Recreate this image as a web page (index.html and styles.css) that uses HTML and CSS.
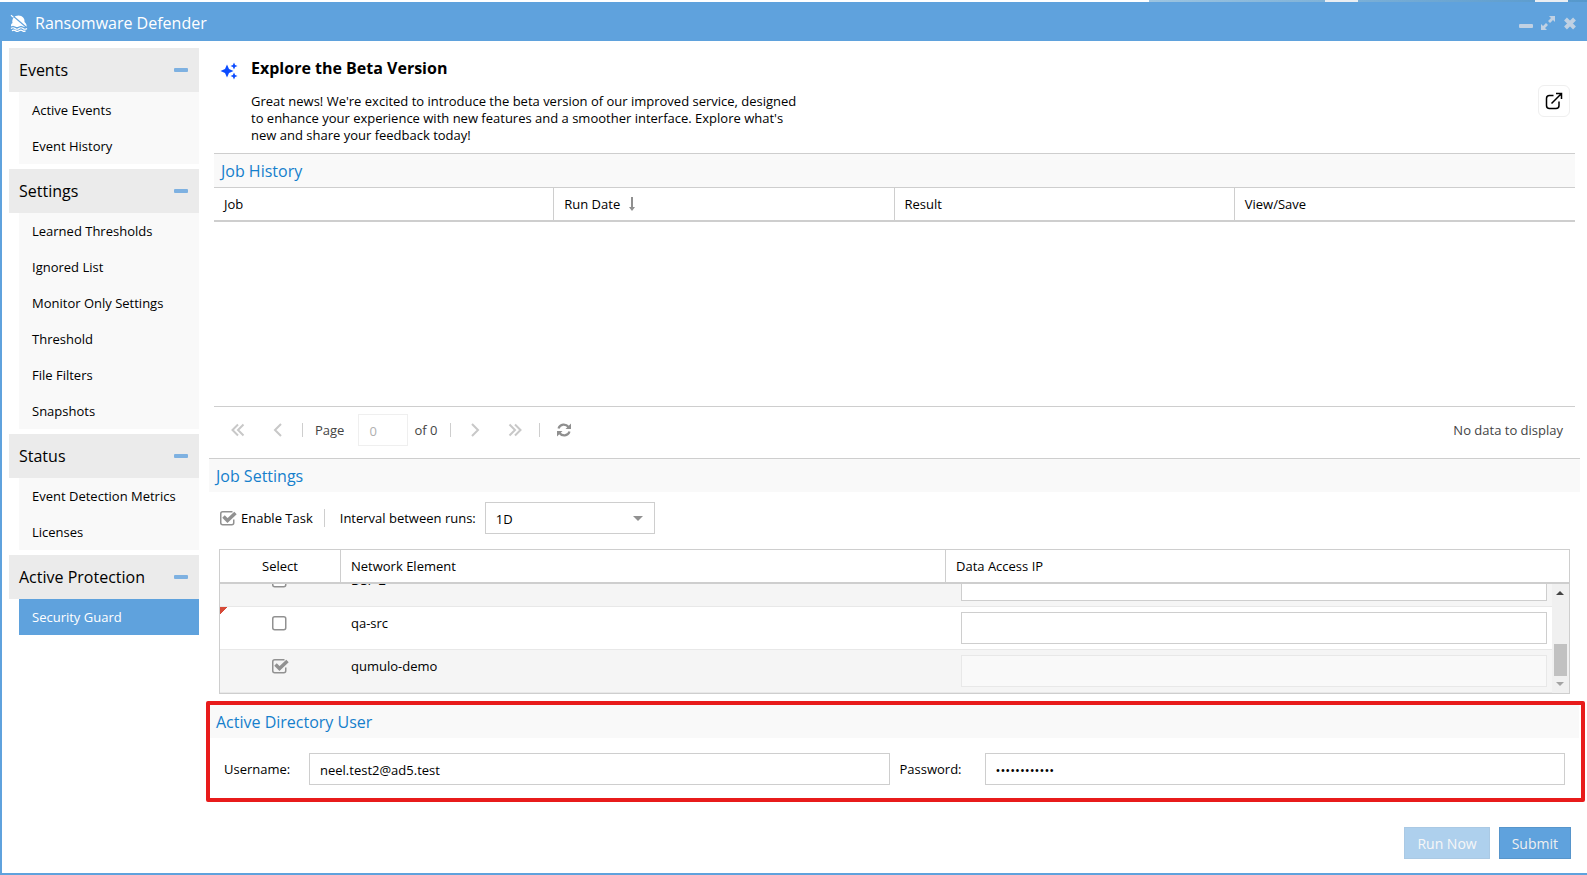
FILE: index.html
```html
<!DOCTYPE html>
<html lang="en">
<head>
<meta charset="utf-8">
<title>Ransomware Defender</title>
<link rel="stylesheet" href="styles.css">
</head>
<body>
<svg class="defs" width="0" height="0" aria-hidden="true">
  <symbol id="dbl-left" viewBox="0 0 14 14"><path d="M7 1.500 1.500 7 7 12.500M12.500 1.500 7 7l5.500 5.500" fill="none" stroke="currentColor" stroke-width="2"/></symbol>
  <symbol id="left" viewBox="0 0 14 14"><path d="M10 1 4 7l6 6" fill="none" stroke="currentColor" stroke-width="2"/></symbol>
</svg>
<div class="backdrop"></div>
<div class="window">
  <header class="titlebar">
    <svg class="logo" width="18" height="18" viewBox="0 0 18 18" aria-hidden="true">
      <path d="M2.500 9C1.500 5 4.500 1.500 8.500 1.500c4 0 6.500 3 6 6.500 1.500 1 2.500 3 2 5H1.500C.5 11.500 1 10 2.500 9z" fill="#fff"/>
      <path d="M1 13q2-1.500 4 0t4 0 4 0 4 0" fill="none" stroke="#5fa2dd" stroke-width="1"/>
      <path d="M1 14.500q2-1.500 4 0t4 0 4 0 4 0M2 16.800q2-1.300 3.500 0t3.500 0 3.500 0 3 0" fill="none" stroke="#fff" stroke-width="1.200"/>
      <path d="M2.500 1.500 16 13" stroke="#5fa2dd" stroke-width="1.100"/>
      <path d="M1 1.200l2.500 2.200" stroke="#fff" stroke-width="1.200"/>
    </svg>
    <h1>Ransomware Defender</h1>
    <div class="tools">
      <button type="button" aria-label="Minimize"><svg width="14" height="16" viewBox="0 0 14 16"><rect y="9" width="14" height="4" rx="1" fill="currentColor"/></svg></button>
      <button type="button" aria-label="Maximize"><svg width="16" height="16" viewBox="0 0 16 16"><path d="M9 1h6v6l-2-2-3 3-2-2 3-3zM7 15H1V9l2 2 3-3 2 2-3 3z" fill="currentColor"/></svg></button>
      <button type="button" aria-label="Close"><svg width="14" height="16" viewBox="0 0 14 16"><path d="M2.500 4l9 9M11.500 4l-9 9" stroke="currentColor" stroke-width="4"/></svg></button>
    </div>
  </header>

  <div class="body">
    <nav class="sidebar">
      <section>
        <h2>Events<span class="minus"></span></h2>
        <ul><li><a href="#">Active Events</a></li><li><a href="#">Event History</a></li></ul>
      </section>
      <section>
        <h2>Settings<span class="minus"></span></h2>
        <ul><li><a href="#">Learned Thresholds</a></li><li><a href="#">Ignored List</a></li><li><a href="#">Monitor Only Settings</a></li><li><a href="#">Threshold</a></li><li><a href="#">File Filters</a></li><li><a href="#">Snapshots</a></li></ul>
      </section>
      <section>
        <h2>Status<span class="minus"></span></h2>
        <ul><li><a href="#">Event Detection Metrics</a></li><li><a href="#">Licenses</a></li></ul>
      </section>
      <section>
        <h2>Active Protection<span class="minus"></span></h2>
        <ul><li><a href="#" class="current">Security Guard</a></li></ul>
      </section>
    </nav>

    <main class="main">
      <section class="banner">
        <svg class="spark" width="18" height="18" viewBox="0 0 18 18" aria-hidden="true"><path d="M7 2.500l2 4.500 4.500 2-4.500 2-2 4.500L5 11 .5 9 5 7zM14 .5l1.100 2.400L17.500 4l-2.400 1.100L14 7.500l-1.100-2.400L10.500 4l2.400-1.100zM14 10.500l1.100 2.400 2.400 1.100-2.400 1.100L14 17.500l-1.100-2.400-2.400-1.100 2.400-1.100z" fill="#0b4bff"/></svg>
        <div class="pitch">
          <h2>Explore the Beta Version</h2>
          <p>Great news! We're excited to introduce the beta version of our improved service, designed to enhance your experience with new features and a smoother interface. Explore what's new and share your feedback today!</p>
        </div>
        <button type="button" class="open" aria-label="Open beta version"><svg width="18" height="18" viewBox="0 0 18 18"><path d="M8.500 3.500H4.500Q1.500 3.500 1.500 6.500v7q0 3 3 3h6.500q3 0 3-3V9.500M6.500 11.500 16 2M11 1.500h5.500V7" fill="none" stroke="#000" stroke-width="1.500"/></svg></button>
      </section>

      <section class="history">
        <h2 class="panel-title">Job History</h2>
        <table class="jobs">
          <thead><tr><th>Job</th><th>Run Date<svg class="sort" width="8" height="14" viewBox="0 0 8 14" aria-hidden="true"><path d="M3 0h2v10h2l-3 4-3-4h2z" fill="#8f8f8f"/></svg></th><th>Result</th><th>View/Save</th></tr></thead>
        </table>
        <div class="pager">
          <button type="button" aria-label="First page"><svg width="14" height="14"><use href="#dbl-left"/></svg></button>
          <button type="button" aria-label="Previous page"><svg width="14" height="14"><use href="#left"/></svg></button>
          <span class="bar"></span>
          <label for="page">Page</label>
          <input id="page" value="0" disabled>
          <span>of 0</span>
          <span class="bar"></span>
          <button type="button" aria-label="Next page"><svg class="flip" width="14" height="14"><use href="#left"/></svg></button>
          <button type="button" aria-label="Last page"><svg class="flip" width="14" height="14"><use href="#dbl-left"/></svg></button>
          <span class="bar"></span>
          <button type="button" class="refresh" aria-label="Refresh"><svg width="14" height="14" viewBox="0 0 14 14"><path d="M1.500 5.500C3 .5 9 .5 11.500 4M12.500 8.500C11 13.500 5 13.500 2.500 10" fill="none" stroke="currentColor" stroke-width="2.200"/><path d="M14 .5V6H8.500zM0 13.500V8h5.500z" fill="currentColor"/></svg></button>
          <span class="status">No data to display</span>
        </div>
      </section>

      <section class="settings">
        <h2 class="panel-title">Job Settings</h2>
        <div class="options">
          <input type="checkbox" id="enable" checked><label for="enable">Enable Task</label>
          <span class="bar"></span>
          <label for="interval">Interval between runs:</label>
          <select id="interval"><option>1D</option></select>
        </div>
        <div class="grid">
          <table class="elements head">
            <colgroup><col class="c1"><col class="c2"><col></colgroup>
            <thead><tr><th>Select</th><th>Network Element</th><th>Data Access IP</th></tr></thead>
          </table>
          <div class="viewport">
            <div class="rows">
              <table class="elements">
                <colgroup><col class="c1"><col class="c2"><col></colgroup>
                <tbody>
                  <tr class="alt"><td><input type="checkbox" aria-label="Select DSF-2"></td><td>DSF-2</td><td><input type="text" aria-label="IP for DSF-2"></td></tr>
                  <tr><td class="dirty"><input type="checkbox" aria-label="Select qa-src"></td><td>qa-src</td><td><input type="text" aria-label="IP for qa-src"></td></tr>
                  <tr class="alt"><td><input type="checkbox" checked aria-label="Select qumulo-demo"></td><td>qumulo-demo</td><td><input type="text" disabled aria-label="IP for qumulo-demo"></td></tr>
                </tbody>
              </table>
            </div>
            <div class="scrollbar">
              <svg width="8" height="4" viewBox="0 0 8 4"><path d="M0 4 4 0l4 4z" fill="#444"/></svg>
              <span class="thumb"></span>
              <svg width="8" height="4" viewBox="0 0 8 4"><path d="M0 0h8L4 4z" fill="#a3a3a3"/></svg>
            </div>
          </div>
        </div>
      </section>

      <section class="directory">
        <h2 class="panel-title">Active Directory User</h2>
        <form class="login">
          <label for="user">Username:</label><input type="text" id="user" value="neel.test2@ad5.test">
          <label for="pass">Password:</label><input type="password" id="pass" value="abcdefghijkl">
        </form>
      </section>

      <footer class="actions">
        <button type="button" class="btn" disabled>Run Now</button>
        <button type="button" class="btn">Submit</button>
      </footer>
    </main>
  </div>
</div>
</body>
</html>
```
FILE: styles.css
```css
* { box-sizing: border-box; }
html, body { height: 100%; }
body { margin: 0; display: flex; flex-direction: column; background: #fff; color: #000; font: 13px/17px "Open Sans", "Noto Sans", sans-serif; }
h1, h2, p, ul { margin: 0; padding: 0; font-weight: 400; }
button { padding: 0; border: 0; background: none; font: inherit; color: inherit; display: inline-flex; align-items: center; justify-content: center; }
input, select { margin: 0; font: inherit; color: #000; }
.defs { position: absolute; }

.backdrop { height: 2px; flex: none; margin-left: 1149px; background: linear-gradient(90deg, transparent 176px, #eaeef2 176px 209px, transparent 209px 386px, #eaeef2 386px 419px, transparent 419px), linear-gradient(90deg, #9cc4e0, #5598cc); }
.window { flex: 1; display: flex; flex-direction: column; border-left: 2px solid #5fa2dd; border-bottom: 2px solid #5fa2dd; }
.titlebar { height: 39px; flex: none; display: flex; align-items: center; padding: 2px 10px 0 8px; background: #5fa2dd; color: #fff; }
.titlebar h1 { flex: 1; margin-left: 7px; font-size: 16px; line-height: 24px; }
.tools { display: flex; gap: 7px; color: #c0d1e3; }

.body { flex: 1; display: flex; padding: 7px 0 14px 7px; }
.sidebar { width: 190px; flex: none; display: flex; flex-direction: column; gap: 5px; }
.sidebar h2 { height: 44px; padding: 0 11px 0 10px; display: flex; align-items: center; justify-content: space-between; background: #ebebeb; font-size: 16px; }
.minus { width: 14px; height: 4px; border-radius: 1px; background: #7eb1e1; }
.sidebar ul { margin-left: 10px; list-style: none; background: #f9f9f9; }
.sidebar a { height: 36px; display: flex; align-items: center; padding-left: 13px; color: #000; text-decoration: none; }
.sidebar a.current { background: #5fa2dd; color: #fff; }

.main { flex: 1; min-width: 0; display: flex; flex-direction: column; padding-left: 7px; }
.banner { display: flex; margin: 0 12px 0 8px; padding-bottom: 9px; }
.spark { margin: 14px 0 0 6px; }
.pitch { flex: 1; margin-left: 13px; }
.pitch h2 { font-size: 16px; font-weight: 700; line-height: 24px; margin: 8px 0 13px; }
.pitch p { max-width: 560px; }
.open { width: 32px; height: 32px; margin: 37px 5px 0 0; border: 1px solid #efefef; border-radius: 6px; }

.panel-title { height: 33px; padding: 1px 7px 0; background: #f9f9f9; color: #157fcc; font-size: 16px; line-height: 32px; }
.history { flex: 1; display: flex; flex-direction: column; margin: 0 12px 0 8px; border-top: 1px solid #cecece; }
table { width: 100%; border-collapse: separate; border-spacing: 0; table-layout: fixed; }
th { padding: 0 10px; text-align: left; font-weight: 400; border-right: 1px solid #cecece; border-bottom: 2px solid #cecece; }
th:last-child { border-right: 0; }
.jobs th { height: 35px; border-top: 1px solid #cecece; }
.sort { margin-left: 8px; vertical-align: -2px; }
.pager { margin-top: auto; height: 52px; display: flex; align-items: center; padding: 0 12px 5px; border-top: 1px solid #cecece; color: #444; }
.pager button { width: 24px; height: 24px; margin-right: 16px; color: #c8c8c8; }
.bar { width: 1px; height: 14px; background: #cecece; }
.pager label { margin: 0 14px 0 12px; }
.pager input { width: 50px; height: 32px; margin-right: 6px; padding: 2px 10px 0; border: 1px solid #efefef; background: #fff; color: #b0b0b0; }
.pager input ~ .bar { margin: 0 12px 0 13px; }
.pager button + .bar, .pager button ~ button + .bar { margin-left: -4px; }
.pager .refresh { color: #8f8f8f; }
.flip { transform: scaleX(-1); }
.status { margin-left: auto; }

.settings { margin: 0 7px 0 3px; border-top: 1px solid #cecece; }
.options { display: flex; align-items: center; padding: 10px 10px 15px 11px; }
.options label { margin-left: 4px; }
.options .bar { height: 18px; margin: 0 11px; }
.options select { width: 170px; height: 32px; margin-left: 9px; padding: 2px 10px 0; border: 1px solid #cecece; border-radius: 0; appearance: none; background: #fff url("data:image/svg+xml,%3Csvg xmlns='http://www.w3.org/2000/svg' viewBox='0 0 10 5'%3E%3Cpath d='M0 0h10L5 5z' fill='%23919191'/%3E%3C/svg%3E") no-repeat right 11px center / 10px 5px; }
input[type=checkbox] { appearance: none; width: 17px; height: 15px; flex: none; display: block; background: url("data:image/svg+xml,%3Csvg xmlns='http://www.w3.org/2000/svg' viewBox='0 0 17 15'%3E%3Crect x='.75' y='.75' width='13' height='13' rx='2' fill='white' stroke='%23919191' stroke-width='1.5'/%3E%3C/svg%3E"); }
input[type=checkbox]:checked { background-image: url("data:image/svg+xml,%3Csvg xmlns='http://www.w3.org/2000/svg' viewBox='0 0 17 15'%3E%3Cpath d='M12.500 .75H2.750Q.75 .75 .75 2.750v9q0 2 2 2h9q2 0 2-2V8.500' fill='none' stroke='%23919191' stroke-width='1.5'/%3E%3Cpath d='M3.500 5.500 7.500 9.500 15.500 2' fill='none' stroke='%23919191' stroke-width='3.500'/%3E%3C/svg%3E"); }
.grid { margin: 0 10px; border: 1px solid #cecece; }
.c1 { width: 121px; }
.c2 { width: 605px; }
.elements th { height: 34px; }
.elements th:first-child { text-align: center; }
.viewport { height: 109px; display: flex; overflow: hidden; }
.rows { flex: 1; min-width: 0; display: flex; align-items: flex-end; }
td { height: 43px; padding: 8px 10px 0; vertical-align: top; border-bottom: 1px solid #e8e8e8; }
td:first-child { padding: 9px 0 0 52px; }
td:last-child { padding: 5px 5px 0 15px; }
.alt { background: #f5f5f5; }
.dirty { background: linear-gradient(135deg, #d64a38 5px, transparent 5px); }
input[type=text], input[type=password] { display: block; width: 100%; height: 32px; padding: 2px 10px 0; border: 1px solid #cecece; border-radius: 0; background: #fff; }
input[type=text]:disabled { border-color: #e8e8e8; background: #f9f9f9; }
.scrollbar { width: 17px; flex: none; display: flex; flex-direction: column; align-items: center; padding: 7px 1px 7px 0; background: #f0f0f0; }
.thumb { width: 13px; height: 32px; margin: auto 0 6px; background: #c1c1c1; }

.directory { margin: 7px 2px 0 0; border: 4px solid #e81b1b; border-radius: 2px; }
.directory .panel-title { margin-right: 2px; padding-left: 6px; }
.login { display: flex; align-items: center; padding: 15px 16px 13px 14px; }
.login label { width: 85px; flex: none; }
.login input { flex: 1; min-width: 0; }
.login input + label { margin-left: 10px; }

.actions { display: flex; justify-content: flex-end; gap: 9px; margin: 25px 16px 0 0; }
.btn { height: 32px; padding: 0 12px; background: #5fa2dd; border: 1px solid #5795cb; color: #f0f0f0; font-size: 14px; }
.btn:disabled { opacity: .5; }
```
